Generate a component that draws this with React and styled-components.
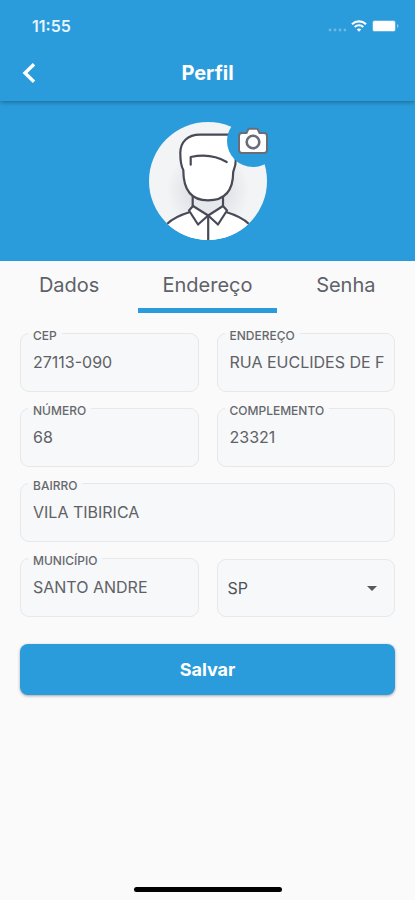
import { useState } from 'react'
import styled, { createGlobalStyle } from 'styled-components'

const BLUE = '#2b9cdb'

const GlobalStyle = createGlobalStyle`
	* {
		box-sizing: border-box;
	}

	body {
		margin: 0;
		background: #fafafa;
		color: #5b5d62;
		font-family: Inter, 'Liberation Sans', sans-serif;
	}

	button,
	input,
	select {
		font-family: inherit;
	}
`

const Page = styled.div`
	display: flex;
	flex-direction: column;
	min-height: 100vh;
`

const Header = styled.header`
	position: relative;
	background: ${BLUE};
	box-shadow: 0 1px 5px rgba(0, 0, 0, 0.35);
`

const StatusBar = styled.div`
	display: flex;
	align-items: center;
	justify-content: space-between;
	height: 44px;
	padding: 7px 16px 0 32px;
`

const Time = styled.span`
	color: #e6f4fc;
	font-size: 16px;
	font-weight: 600;
	line-height: 20px;
`

const StatusIcons = styled.div`
	display: flex;
	align-items: center;
	gap: 5px;
`

const AppBar = styled.div`
	display: grid;
	grid-template-columns: 48px 1fr 48px;
	align-items: center;
	height: 57px;
	padding: 0 5px;
`

const BackButton = styled.button`
	display: flex;
	align-items: center;
	justify-content: center;
	height: 48px;
	padding: 0;
	border: 0;
	background: none;
`

const Title = styled.h1`
	margin: 0;
	color: #fff;
	font-size: 20px;
	font-weight: 700;
	line-height: 24px;
	text-align: center;
`

const Hero = styled.div`
	display: flex;
	justify-content: center;
	padding: 21px 0;
	background: ${BLUE};
`

const AvatarBox = styled.div`
	position: relative;
	width: 118px;
	height: 118px;
`

const CameraButton = styled.button`
	position: absolute;
	top: -7px;
	right: -12px;
	display: flex;
	align-items: center;
	justify-content: center;
	width: 52px;
	height: 52px;
	padding: 0;
	border: 0;
	border-radius: 50%;
	background: ${BLUE};
`

const TabList = styled.div`
	display: grid;
	grid-template-columns: repeat(3, 1fr);
`

const Tab = styled.button`
	height: 52px;
	padding: 0;
	border: 0;
	border-bottom: 5px solid ${({ $active }) => ($active ? BLUE : 'transparent')};
	background: none;
	color: #5f6169;
	font-size: 20px;
	line-height: 24px;
`

const Form = styled.form`
	display: grid;
	grid-template-columns: 1fr 1fr;
	gap: 6px 18px;
	padding: 10px 20px;
`

const FieldBox = styled.fieldset`
	grid-column: ${({ $wide }) => ($wide ? '1 / -1' : 'auto')};
	min-width: 0;
	height: 69px;
	margin: 0;
	padding: 0 10px 0 12px;
	border: 1px solid #e6e8ea;
	border-radius: 9px;
	background: #f6f8fa;
`

/* the extra top padding drops the text a little under the border line */
const Legend = styled.legend`
	margin-left: -5px;
	padding: 6px 5px 0;
	color: #66686c;
	font-size: 12px;
	font-weight: 500;
	line-height: 14px;
`

const Input = styled.input`
	display: block;
	width: 100%;
	height: 38px;
	padding: 0;
	border: 0;
	outline: 0;
	background: none;
	color: #5f6165;
	font-size: 16px;
`

const SelectBox = styled.div`
	display: grid;
	align-items: center;
	margin-top: 11px;
	border: 1px solid #e6e8ea;
	border-radius: 9px;
	background: #f6f8fa;

	> * {
		grid-area: 1 / 1;
	}
`

const Select = styled.select`
	width: 100%;
	height: 56px;
	padding: 0 10px;
	border: 0;
	appearance: none;
	background: none;
	color: #505256;
	font-size: 16px;
`

const Caret = styled.svg`
	justify-self: end;
	margin-right: 17px;
	pointer-events: none;
`

const SaveButton = styled.button`
	grid-column: 1 / -1;
	height: 51px;
	margin-top: 21px;
	border: 0;
	border-radius: 8px;
	background: ${BLUE};
	box-shadow: 0 1px 3px rgba(0, 0, 0, 0.35);
	color: #fff;
	font-size: 18px;
	font-weight: 700;
`

const HomeIndicator = styled.div`
	width: 148px;
	height: 5px;
	margin: auto auto 8px;
	border-radius: 3px;
	background: #000;
`

const TABS = ['Dados', 'Endereço', 'Senha']

function TopBar() {
	return (
		<Header>
			<StatusBar>
				<Time>11:55</Time>
				<StatusIcons>
					<svg width="18" height="12" viewBox="0 0 18 12" fill="#fff" opacity="0.3">
						<circle cx="2" cy="10" r="1.4" />
						<circle cx="7" cy="10" r="1.4" />
						<circle cx="12" cy="10" r="1.4" />
						<circle cx="17" cy="10" r="1.4" />
					</svg>
					<svg width="16" height="12" viewBox="0 0 16 12" fill="none" stroke="#fff">
						<path d="M1 4.2a10.2 10.2 0 0 1 14 0" strokeWidth="2.2" />
						<path d="M3.7 7a6.3 6.3 0 0 1 8.6 0" strokeWidth="2" />
						<path d="M8 11.8 5.8 9.5a3.2 3.2 0 0 1 4.4 0z" fill="#fff" stroke="none" />
					</svg>
					<svg width="27" height="12" viewBox="0 0 27 12">
						<rect width="24" height="12" rx="3" fill="#fff" opacity="0.25" />
						<rect x="1" y="1" width="22" height="10" rx="1.5" fill="#fff" />
						<path d="M25 4v4c1-.4 1.5-1.2 1.5-2s-.5-1.6-1.5-2z" fill="#fff" opacity="0.4" />
					</svg>
				</StatusIcons>
			</StatusBar>
			<AppBar>
				<BackButton type="button" aria-label="Voltar">
					<svg width="14" height="20" viewBox="0 0 14 20" fill="none" stroke="#fff" strokeWidth="3.4">
						<path d="M12 1.2 3 10l9 8.8" />
					</svg>
				</BackButton>
				<Title>Perfil</Title>
			</AppBar>
		</Header>
	)
}

function Avatar() {
	return (
		<AvatarBox>
			<svg width="118" height="118" viewBox="0 0 118 118">
				<defs>
					<clipPath id="avatar-clip">
						<circle cx="59" cy="59" r="59" />
					</clipPath>
					<radialGradient id="avatar-shade" cx="0.5" cy="0.58" r="0.5">
						<stop offset="0.35" stopColor="#e2e4e8" />
						<stop offset="0.7" stopColor="#f3f4f6" />
					</radialGradient>
				</defs>
				<g
					clipPath="url(#avatar-clip)"
					fill="none"
					stroke="#484b57"
					strokeWidth="2.2"
					strokeLinejoin="round"
					strokeLinecap="round"
				>
					<rect width="118" height="118" fill="url(#avatar-shade)" stroke="none" />
					<path d="M18 102c6-6 13-9 23-12h36c10 3 17 6 23 12v18H18z" fill="#fff" stroke="none" />
					<path d="M18 102c6-6 13-9 23-12M77 90c10 3 17 6 23 12" />
					<path d="M43.700 72v12L59 93.500 74 84V72z" fill="#e6e8eb" stroke="none" />
					<path d="M43.700 73v11M74 73v11" />
					<path
						d="M86 12.700H51C38.500 12.700 31.300 20 31.300 31c0 7.500.5 12.500 3 17C34.300 67 41 78.400 59 78.400S84.200 67 84.200 50c2-5 2.800-9 2.800-15z"
						fill="#fff"
					/>
					<path d="M41.700 42.700V35c12-2.600 25-1.600 36 5" />
					<path d="M44 84 40 88.500l9 14L59.200 93.500z" fill="#fff" />
					<path d="M74 84l4 4.500-9 14-9.800-9z" fill="#fff" />
					<path d="M59.200 93.500V118" />
				</g>
			</svg>
			<CameraButton type="button" aria-label="Alterar foto">
				<svg width="32" height="28" viewBox="0 0 32 28" fill="#fff" stroke="#6a6c77" strokeWidth="2">
					<path
						d="M5 6h4.500L11 2.800q.5-1 1.500-1h7q1 0 1.500 1L22.500 6H27q3 0 3 3v14q0 3-3 3H5q-3 0-3-3V9q0-3 3-3z"
						strokeLinejoin="round"
					/>
					<circle cx="16" cy="15" r="6.300" strokeWidth="2.600" />
				</svg>
			</CameraButton>
		</AvatarBox>
	)
}

function Field({ id, label, value, wide }) {
	return (
		<FieldBox $wide={wide}>
			<Legend>
				<label htmlFor={id}>{label}</label>
			</Legend>
			<Input id={id} type="text" defaultValue={value} />
		</FieldBox>
	)
}

function App() {
	const [active, setActive] = useState('Endereço')

	return (
		<Page>
			<GlobalStyle />
			<TopBar />
			<Hero>
				<Avatar />
			</Hero>
			<TabList role="tablist">
				{TABS.map((tab) => (
					<Tab
						key={tab}
						type="button"
						role="tab"
						aria-selected={tab === active}
						$active={tab === active}
						onClick={() => setActive(tab)}
					>
						{tab}
					</Tab>
				))}
			</TabList>
			<Form onSubmit={(e) => e.preventDefault()}>
				<Field id="cep" label="CEP" value="27113-090" />
				<Field id="endereco" label="ENDEREÇO" value="RUA EUCLIDES DE F" />
				<Field id="numero" label="NÚMERO" value="68" />
				<Field id="complemento" label="COMPLEMENTO" value="23321" />
				<Field id="bairro" label="BAIRRO" value="VILA TIBIRICA" wide />
				<Field id="municipio" label="MUNICÍPIO" value="SANTO ANDRE" />
				<SelectBox>
					<Select aria-label="Estado" defaultValue="SP">
						<option>SP</option>
						<option>RJ</option>
						<option>MG</option>
					</Select>
					<Caret width="10" height="5" viewBox="0 0 10 5" fill="#58595c" aria-hidden="true">
						<path d="M0 0h10L5 5z" />
					</Caret>
				</SelectBox>
				<SaveButton type="submit">Salvar</SaveButton>
			</Form>
			<HomeIndicator />
		</Page>
	)
}

export default App
